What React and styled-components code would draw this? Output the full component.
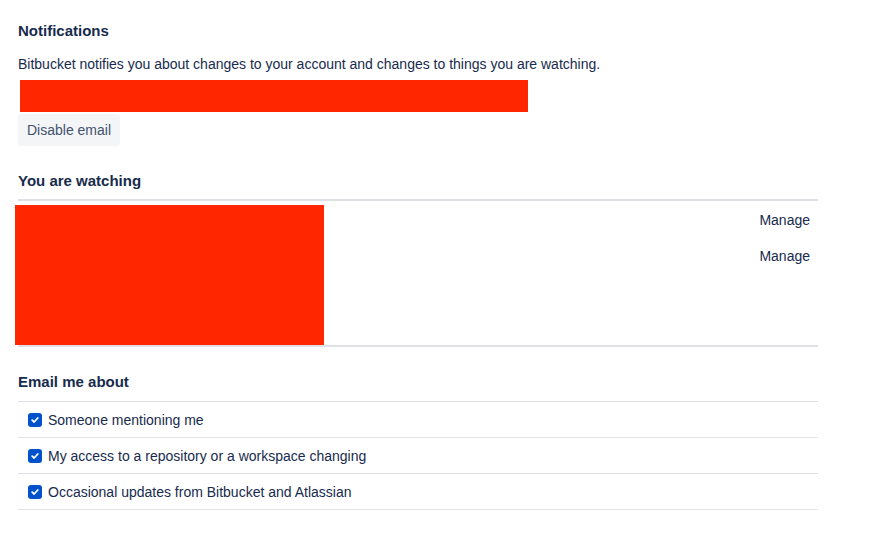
import React from "react";
import styled, { createGlobalStyle } from "styled-components";

const GlobalStyle = createGlobalStyle`
  html, body {
    margin: 0;
    padding: 0;
    background: #fff;
  }
  body {
    font-family: "Liberation Sans", Arial, sans-serif;
    color: #172b4d;
    font-size: 14px;
  }
`;

const Page = styled.div`
  width: 800px;
  padding: 20px 0 0 18px;
  box-sizing: content-box;
`;

const Section = styled.section`
  margin-bottom: ${(props) => props.gap || 0}px;
`;

const Heading = styled.h3`
  margin: 0;
  font-size: 15px;
  font-weight: 600;
  line-height: 22px;
  color: #172b4d;
`;

const Text = styled.p`
  margin: 13px 0 0;
  font-size: 14px;
  line-height: 18px;
  color: #172b4d;
`;

const Redacted = styled.div`
  background: #ff2600;
  width: ${(props) => props.w}px;
  height: ${(props) => props.h}px;
  margin-left: ${(props) => props.offset || 0}px;
  margin-top: ${(props) => props.top || 0}px;
  flex-shrink: 0;
`;

const Button = styled.button`
  display: block;
  margin-top: 2px;
  height: 32px;
  padding: 0 9px;
  border: none;
  border-radius: 3px;
  background: #f4f5f7;
  color: #42526e;
  font-family: inherit;
  font-size: 14px;
  cursor: pointer;
`;

const WatchBox = styled.div`
  margin-top: 7px;
  border-top: 2px solid #dfe1e6;
  border-bottom: 2px solid #dfe1e6;
  display: flex;
  justify-content: space-between;
  height: 148px;
  box-sizing: border-box;
`;

const RedactWrap = styled.div`
  padding-top: 4px;
  margin-left: -3px;
`;

const ManageList = styled.div`
  display: flex;
  flex-direction: column;
  gap: 18px;
  padding: 10px 8px 0 0;
`;

const ManageLink = styled.a`
  font-size: 14px;
  line-height: 18px;
  color: #172b4d;
  text-align: right;
  cursor: pointer;
`;

const OptionList = styled.ul`
  list-style: none;
  margin: 8px 0 0;
  padding: 0;
  border-top: 1px solid #dfe1e6;
`;

const Option = styled.li`
  display: flex;
  align-items: center;
  gap: 6px;
  height: 36px;
  padding-left: 10px;
  border-bottom: 1px solid #dfe1e6;
  box-sizing: border-box;
  font-size: 14px;
  color: #172b4d;
`;

const Box = styled.span`
  width: 14px;
  height: 14px;
  border-radius: 3px;
  background: #0052cc;
  display: inline-flex;
  align-items: center;
  justify-content: center;
`;

const Check = () => (
  <Box>
    <svg width="10" height="10" viewBox="0 0 10 10">
      <path
        d="M2.2 5.2 L4.1 7 L7.8 3"
        fill="none"
        stroke="#fff"
        strokeWidth="1.8"
        strokeLinecap="round"
        strokeLinejoin="round"
      />
    </svg>
  </Box>
);

const options = [
  "Someone mentioning me",
  "My access to a repository or a workspace changing",
  "Occasional updates from Bitbucket and Atlassian",
];

export default function App() {
  return (
    <>
      <GlobalStyle />
      <Page>
        <Section gap={24}>
          <Heading>Notifications</Heading>
          <Text>
            Bitbucket notifies you about changes to your account and changes to
            things you are watching.
          </Text>
          <Redacted w={508} h={32} offset={2} top={7} />
          <Button>Disable email</Button>
        </Section>
        <Section gap={24}>
          <Heading>You are watching</Heading>
          <WatchBox>
            <RedactWrap>
              <Redacted w={309} h={140} />
            </RedactWrap>
            <ManageList>
              <ManageLink>Manage</ManageLink>
              <ManageLink>Manage</ManageLink>
            </ManageList>
          </WatchBox>
        </Section>
        <Section>
          <Heading>Email me about</Heading>
          <OptionList>
            {options.map((o) => (
              <Option key={o}>
                <Check />
                {o}
              </Option>
            ))}
          </OptionList>
        </Section>
      </Page>
    </>
  );
}
